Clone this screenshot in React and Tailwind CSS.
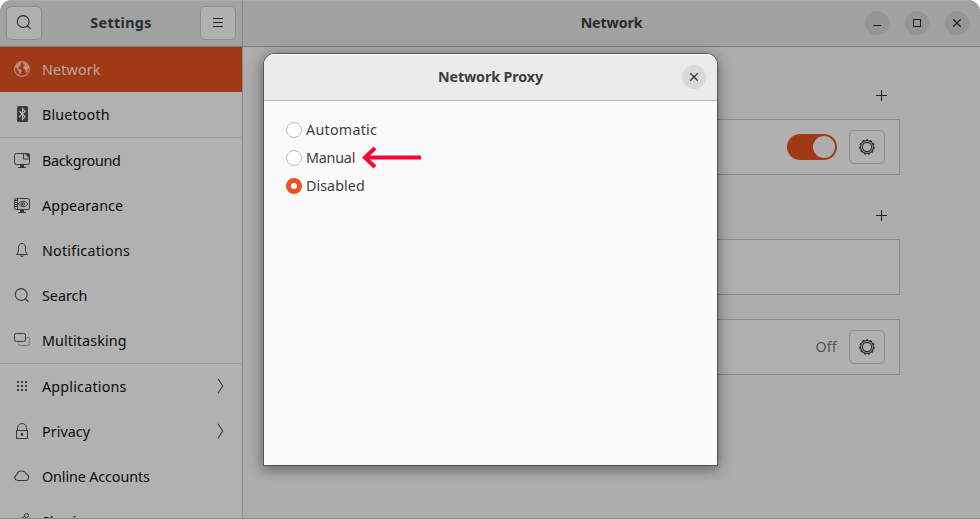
const stroke = { fill: 'none', stroke: 'currentColor' };

function Globe() {
  return (
    <svg width="16" height="16" viewBox="0 0 16 16">
      <circle cx="8" cy="8" r="7.4" {...stroke} strokeWidth="1.1" />
      <path fill="currentColor" d="M1.6 5.2 3.5 2.4 6.6 1 7.4 2 6.4 3.2 7 4.2 5.4 5.4 5.2 6.6 3.8 6.8 4.6 8 6.6 8.2 8 9.6 7 11 6.6 12.8 5.4 13.4 4.8 10.4 3.4 8.8 3 7.2 1.6 6.6ZM9.2 1.2 12 2.2 14.4 4.8 15 7.6 14 8 13.6 10.8 12.4 12 11.4 10.6 11.2 8.6 9.6 8 9 6.2 10 4.8 11.4 4.4 10.4 3.4 9.4 3.2Z" />
    </svg>
  );
}
function Bluetooth() {
  return (
    <svg width="16" height="16" viewBox="0 0 16 16">
      <rect x="3" y="0" width="11" height="16" rx="1.5" fill="currentColor" />
      <path d="M5 5l6.200 5.500L8.500 13.300V2.700l2.700 2.800L5 11" fill="none" stroke="#b8b8b8" strokeWidth="1.100" />
    </svg>
  );
}
function Background() {
  return (
    <svg width="16" height="16" viewBox="0 -1 16 16">
      <rect x=".5" y=".5" width="15" height="11" rx="1.8" {...stroke} />
      <path d="M9.500.500v5.500h6" {...stroke} />
      <path d="M10.500.500h4l1 1v4Z" fill="currentColor" />
      <path d="M6 12h4v2h2v1H4v-1h2Z" fill="currentColor" />
    </svg>
  );
}
function Appearance() {
  return (
    <svg width="16" height="16" viewBox="0 -1 16 16">
      <rect x=".5" y=".5" width="15" height="11" rx="1.500" {...stroke} />
      <path d="M3.500.500v11M1 2.500h2.500M1 4.500h2.500M1 6.500h2.500M1 8.500h2.500" {...stroke} />
      <path d="M4.300 6Q9 .5 14 6 9 11.500 4.300 6" {...stroke} strokeWidth=".9" />
      <circle cx="8.700" cy="6" r="1.900" {...stroke} strokeWidth=".8" />
      <circle cx="8.500" cy="6" r="1" fill="currentColor" />
      <path d="M6 12h4v2h2v1H4v-1h2Z" fill="currentColor" />
    </svg>
  );
}
function Bell() {
  return (
    <svg width="16" height="16" viewBox="0 -1 16 16">
      <path d="M2.500 11.500C4.300 10 4.500 8.500 4.500 5 4.500 2 6 .5 8 .5S11.500 2 11.500 5c0 3.500.2 5 2 6.500Z" {...stroke} />
      <path d="M6 12.500h4l-1.200 1.500H7.200Z" fill="currentColor" />
    </svg>
  );
}
function Search() {
  return (
    <svg width="16" height="16" viewBox="0 -1 16 16">
      <circle cx="7.200" cy="6.500" r="5.900" {...stroke} strokeWidth="1.100" />
      <path d="m11.200 10.500 3.300 3.300" {...stroke} strokeWidth="1.200" />
    </svg>
  );
}
function Windows() {
  return (
    <svg width="16" height="16" viewBox="0 -1 16 16">
      <path d="M13 4.500h1.500q1 0 1 1v5q0 2-2 2h-7q-2 0-2-2" {...stroke} opacity=".5" />
      <rect x=".5" y=".5" width="11" height="8" rx="1.800" {...stroke} />
    </svg>
  );
}
function Dots() {
  return (
    <svg width="16" height="16" viewBox="0 0 16 16" fill="currentColor">
      {[3, 7, 11].map((x) => [3, 7, 11].map((y) => <rect key={`${x}-${y}`} x={x} y={y} width="2" height="2" />))}
    </svg>
  );
}
function Lock() {
  return (
    <svg width="16" height="16" viewBox="0 0 16 16">
      <rect x="2.500" y="7.500" width="11" height="8" {...stroke} />
      <path d="M3.500 7V5a4.500 4.500 0 0 1 9 0V7" {...stroke} />
      <rect x="7" y="10" width="2" height="3" fill="currentColor" />
    </svg>
  );
}
function Cloud() {
  return (
    <svg width="16" height="16" viewBox="0 0 16 16">
      <path d="M3.500 12.500A3 3 0 0 1 2.800 6.700 5 5 0 0 1 12.300 6.300 3.200 3.200 0 0 1 12.300 12.500Z" {...stroke} strokeWidth="1.100" />
    </svg>
  );
}
function Share() {
  return (
    <svg width="16" height="16" viewBox="0 0 16 16" {...stroke}>
      <circle cx="12.500" cy="2.500" r="2" />
      <circle cx="3" cy="7.500" r="2" />
      <circle cx="12.500" cy="12.500" r="2" />
      <path d="m4.800 6.500 6-3.100M4.800 8.500l6 3" />
    </svg>
  );
}
function Gear() {
  return (
    <svg width="16" height="16" viewBox="0 0 16 16" {...stroke}>
      <circle cx="8" cy="8" r="6.500" strokeWidth="1.100" />
      <circle cx="8" cy="8" r="7.200" strokeWidth="1.300" strokeDasharray="2 2.112" strokeDashoffset="1" transform="rotate(-90 8 8)" />
      <circle cx="8" cy="8" r="4.600" strokeWidth="1.100" />
    </svg>
  );
}
function Cross() {
  return (
    <svg width="8" height="8" viewBox="0 0 8 8" {...stroke} strokeWidth="1.300">
      <path d="m.3.3 7.400 7.400M7.700.3.300 7.700" />
    </svg>
  );
}

const rows = [
  { label: 'Network', Icon: Globe, active: true, tracking: 'tracking-[0.15px]' },
  { label: 'Bluetooth', Icon: Bluetooth, tracking: 'tracking-[0.15px]' },
  { label: 'Background', Icon: Background, line: true, tracking: 'tracking-[-0.27px]' },
  { label: 'Appearance', Icon: Appearance, tracking: 'tracking-[0.1px]' },
  { label: 'Notifications', Icon: Bell, tracking: 'tracking-[0.23px]' },
  { label: 'Search', Icon: Search, tracking: 'tracking-normal' },
  { label: 'Multitasking', Icon: Windows, tracking: 'tracking-[0.1px]' },
  { label: 'Applications', Icon: Dots, line: true, more: true, tracking: 'tracking-[0.2px]' },
  { label: 'Privacy', Icon: Lock, more: true, tracking: 'tracking-[0.05px]' },
  { label: 'Online Accounts', Icon: Cloud, tracking: 'tracking-[-0.1px]' },
  { label: 'Sharing', Icon: Share, tracking: 'tracking-normal' },
];

function Row({ label, Icon, active, line, more, tracking }) {
  return (
    <li className={line ? 'border-t border-[#9b9b9b]' : ''}>
      <div className={`flex h-[45px] items-center pl-3.5 pr-[18px] ${active ? 'bg-[#a03917] text-[#b5a9a5]' : 'text-[#0b0b0b]'}`}>
        <span className={`-mt-px ${active ? 'text-[#b98f82]' : 'text-[#3a3a3a]'}`}><Icon /></span>
        <span className={`ml-3 flex-1 ${tracking}`}>{label}</span>
        {more && (
          <svg className="-mt-px" width="7" height="16" viewBox="0 0 7 16" {...stroke}>
            <path stroke="#3a3a3a" strokeWidth="1.100" d="m1 .7 4.700 7.300L1 15.300" />
          </svg>
        )}
      </div>
    </li>
  );
}

function BoxButton({ children }) {
  return (
    <button className="flex h-[34px] w-9 items-center justify-center rounded-[5px] border border-[#8c8c8c] bg-[#b0b0b0] text-[#282828]">
      {children}
    </button>
  );
}

function Plus() {
  return (
    <svg width="11" height="11" viewBox="0 0 11 11" fill="none" stroke="#202020">
      <path d="M5.500 0v11M0 5.500h11" />
    </svg>
  );
}

function Card({ children }) {
  return (
    <div className="flex h-14 items-center justify-end gap-3 border border-[#8a8a8a] bg-[#b0b0b0] pr-3.5">{children}</div>
  );
}

function Radio({ label, checked, tracking }) {
  return (
    <label className="flex h-7 items-center gap-1">
      <span className={`flex size-4 items-center justify-center rounded-full ${checked ? 'bg-[#e95420]' : 'border border-[#bdbdbd] bg-white'}`}>
        {checked && <span className="size-1.5 rounded-full bg-white" />}
      </span>
      <span className={tracking}>{label}</span>
    </label>
  );
}

export default function App() {
  return (
    <div className="h-[519px] w-[980px] overflow-hidden bg-white font-['Noto_Sans',sans-serif] text-[14.3px] leading-5">
      <div className="relative flex h-full overflow-hidden rounded-t-[12px] bg-[#adadad]">
        <aside className="flex h-full w-[243px] flex-col border-r border-[#878787] bg-[#b1b1b1]">
          <header className="flex h-[47px] shrink-0 items-center justify-between border-b border-[#7d7d7d] bg-[#a2a2a2] px-1.5 shadow-[inset_0_1px_#aaaaaa]">
            <BoxButton><span className="mb-0.5"><Search /></span></BoxButton>
            <h1 className="font-bold tracking-[0.35px] text-[#2b2b2b]">Settings</h1>
            <BoxButton>
              <svg width="10" height="10" viewBox="0 0 10 10" {...stroke}><path d="M0 .5h10M0 4.500h10M0 8.500h10" /></svg>
            </BoxButton>
          </header>
          <ul className="min-h-0 flex-1 overflow-hidden">
            {rows.map((r) => <Row key={r.label} {...r} />)}
          </ul>
        </aside>
        <main className="flex-1">
          <header className="grid h-[47px] grid-cols-[1fr_auto_1fr] items-center border-b border-[#7d7d7d] bg-[#a2a2a2] shadow-[inset_0_1px_#aaaaaa]">
            <span />
            <h2 className="font-bold tracking-[-0.15px] text-[#2b2b2b]">Network</h2>
            <div className="flex justify-end gap-4 pr-[11px] text-[#252525]">
              <span className="flex size-6 items-center justify-center rounded-full bg-[#959595]"><span className="mt-1 h-px w-2 bg-[#222222]" /></span>
              <span className="flex size-6 items-center justify-center rounded-full bg-[#959595]"><span className="size-2 border border-[#222222]" /></span>
              <span className="flex size-6 items-center justify-center rounded-full bg-[#959595]"><Cross /></span>
            </div>
          </header>
          <div className="ml-20 mr-20 flex flex-col pt-[43px]">
            <div className="mb-[18px] flex justify-end pr-[13px]"><Plus /></div>
            <Card>
              <span className="flex h-[26px] w-[50px] items-center justify-end rounded-full bg-[#a03917] pr-[2px]">
                <span className="size-[22px] rounded-full bg-[#adadad]" />
              </span>
              <BoxButton><Gear /></BoxButton>
            </Card>
            <div className="mb-[18px] mt-[35px] flex justify-end pr-[13px]"><Plus /></div>
            <Card />
            <div className="h-6" />
            <Card>
              <span className="tracking-[0.2px] text-[#555555]">Off</span>
              <BoxButton><Gear /></BoxButton>
            </Card>
          </div>
        </main>

        <section className="absolute left-[264px] top-[54px] h-[411px] w-[453px] rounded-t-[11px] bg-[#fafafa] shadow-[0_0_0_1px_rgba(0,0,0,0.36),0_3px_14px_2px_rgba(0,0,0,0.42)]">
          <header className="grid h-[47px] grid-cols-[1fr_auto_1fr] items-center rounded-t-[11px] border-b border-[#b8b8b8] bg-[#ebebeb] shadow-[inset_0_1px_#ffffff]">
            <span />
            <h3 className="font-bold tracking-[-0.12px] text-[#3d3d3d]">Network Proxy</h3>
            <span className="mr-[11px] flex size-6 items-center justify-center justify-self-end rounded-full bg-[#d9d9d9] text-[#333333]"><Cross /></span>
          </header>
          <div className="flex flex-col pl-[22px] pt-[15px] text-[#3d3d3d]">
            <Radio label="Automatic" tracking="tracking-[0.25px]" />
            <Radio label="Manual" tracking="tracking-[-0.2px]" />
            <Radio label="Disabled" tracking="tracking-[0.05px]" checked />
          </div>
          <svg className="absolute left-[97px] top-[92px]" width="61" height="24" viewBox="0 0 61 24" fill="none" stroke="#ff0037">
            <path strokeWidth="4" d="M60 11.500H4" />
            <path strokeWidth="4" d="M14 2 4 11.500l10 9.500" />
          </svg>
        </section>
        <div className="absolute inset-x-0 bottom-0 h-px bg-[#8c8c8c]" />
      </div>
    </div>
  );
}
